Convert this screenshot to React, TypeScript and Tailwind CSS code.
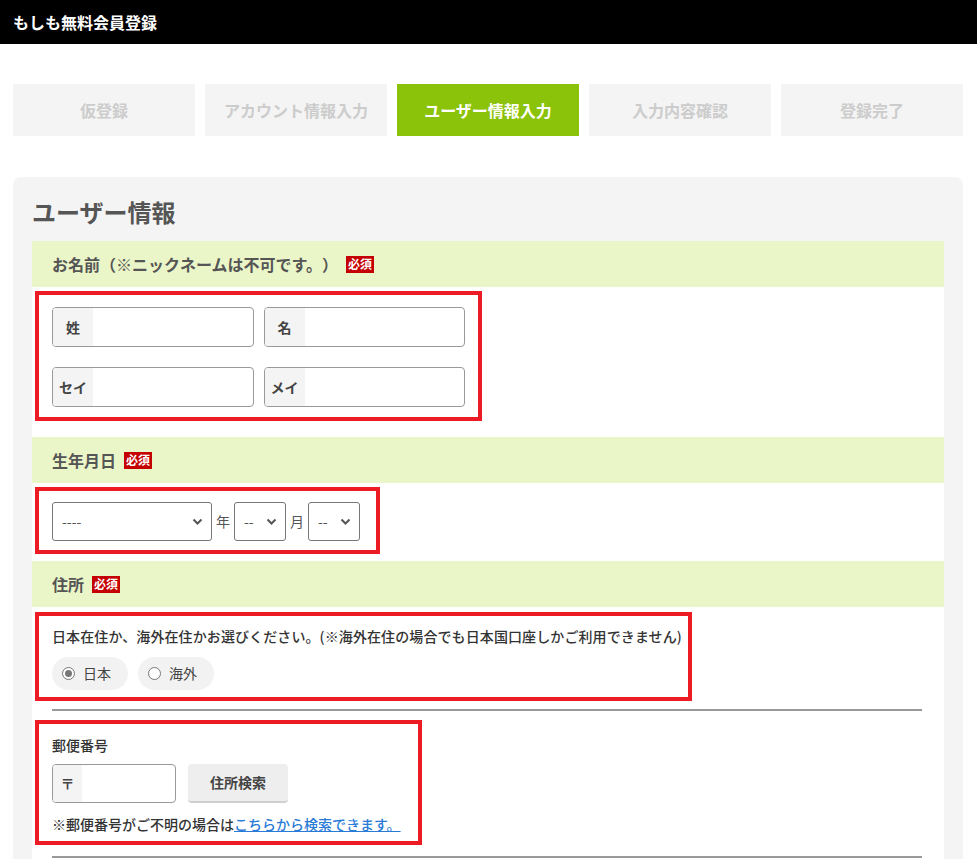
import React, { useState } from 'react';

const FONT = { fontFamily: '"Noto Sans CJK JP", "Noto Sans", sans-serif' };

const STEPS = ['仮登録', 'アカウント情報入力', 'ユーザー情報入力', '入力内容確認', '登録完了'];

const Badge = () => (
  <span className="ml-2 inline-flex h-[17px] items-center bg-[#c40000] px-[2px] text-[12px] font-bold leading-none text-white">
    必須
  </span>
);

const Heading = ({ children }: { children: React.ReactNode }) => (
  <div className="flex h-[46px] items-center bg-[#ebf6c8] px-5 text-[16px] font-bold leading-none text-[#555]">
    {children}
  </div>
);

const PrefixInput = ({ label, className }: { label: string; className: string }) => (
  <div className={`flex h-10 overflow-hidden rounded-[4px] border border-[#999] bg-white ${className}`}>
    <span className="flex w-10 shrink-0 items-center justify-center bg-[#f4f4f4] text-[14px] font-bold text-[#444]">
      {label}
    </span>
    <input className="min-w-0 flex-1 px-2 text-[14px] outline-none" />
  </div>
);

const Select = ({ value, className }: { value: string; className: string }) => (
  <div className={`relative h-[39px] rounded-[3px] border border-[#777] bg-white ${className}`}>
    <span className="absolute left-[9px] top-0 flex h-full items-center text-[14px] text-[#555]">{value}</span>
    <svg className="absolute right-[8px] top-[15px]" width="11" height="8" viewBox="0 0 11 8" fill="none">
      <path d="M1.5 1.5 L5.5 5.5 L9.5 1.5" stroke="#555" strokeWidth="2" />
    </svg>
  </div>
);

export default function App() {
  const [country, setCountry] = useState<'jp' | 'abroad'>('jp');

  return (
    <div className="min-h-[859px] bg-white [text-spacing-trim:space-all]" style={FONT}>
      {/* Header */}
      <div className="flex h-11 items-center bg-black px-[13px] text-[16px] font-bold text-white">
        もしも無料会員登録
      </div>

      {/* Steps */}
      <div className="mx-[13px] mt-10 flex gap-[10px]">
        {STEPS.map((s, i) => (
          <div
            key={s}
            className={`flex h-[52px] w-[182px] items-center justify-center text-[16px] font-bold ${
              i === 2 ? 'bg-[#8bc20a] text-white' : 'bg-[#f4f4f4] text-[#cccccc]'
            }`}
          >
            {s}
          </div>
        ))}
      </div>

      {/* Card */}
      <div className="mx-[13px] mt-[41px] w-[950px] rounded-t-[8px] bg-[#f4f4f4] px-[19px]">
        <h1 className="pb-[11px] pt-[17px] text-[24px] font-bold leading-[36px] text-[#555]">ユーザー情報</h1>

        <div className="bg-white">
          <Heading>
            お名前（※ニックネームは不可です。）<Badge />
          </Heading>
          <div className="px-[3px] pb-4 pt-1">
            <div className="w-[447px] border-4 border-[#ed1c24] px-[13px] pb-[10px] pt-3">
              <div className="flex gap-[10px]">
                <PrefixInput label="姓" className="w-[202px]" />
                <PrefixInput label="名" className="w-[202px]" />
              </div>
              <div className="mt-5 flex gap-[10px]">
                <PrefixInput label="セイ" className="w-[202px]" />
                <PrefixInput label="メイ" className="w-[202px]" />
              </div>
            </div>
          </div>

          <Heading>
            生年月日<Badge />
          </Heading>
          <div className="px-[3px] pb-[7px] pt-1">
            <div className="flex w-[345px] items-center border-4 border-[#ed1c24] px-[13px] pb-[9px] pt-[11px] text-[14px] text-[#555]">
              <Select value="----" className="w-[160px]" />
              <span className="mx-[4px]">年</span>
              <Select value="--" className="w-[52px]" />
              <span className="mx-[4px]">月</span>
              <Select value="--" className="w-[52px]" />
            </div>
          </div>

          <Heading>
            住所<Badge />
          </Heading>
          <div className="px-[3px] pt-[5px]">
            <div className="w-[657px] border-4 border-[#ed1c24] px-[13px] pb-[7px] pt-[10px]">
              <p className="whitespace-nowrap text-[14px] font-medium leading-[20px] tracking-[0.1px] text-[#333]">
                日本在住か、海外在住かお選びください。(※海外在住の場合でも日本国口座しかご利用できません)
              </p>
              <div className="mt-[11px] flex gap-[10px]">
                {[
                  { id: 'jp', label: '日本' },
                  { id: 'abroad', label: '海外' },
                ].map((r) => (
                  <button
                    key={r.id}
                    onClick={() => setCountry(r.id as 'jp' | 'abroad')}
                    className="flex h-[33px] w-[76px] items-center gap-[8px] rounded-full bg-[#f2f2f2] pl-[10px] text-[14px] text-[#444]"
                  >
                    <span className="flex h-[13px] w-[13px] items-center justify-center rounded-full border border-[#777] bg-white">
                      {country === r.id && <span className="h-[7px] w-[7px] rounded-full bg-[#777]" />}
                    </span>
                    {r.label}
                  </button>
                ))}
              </div>
            </div>
          </div>

          <div className="ml-5 mt-[8px] h-[2px] w-[870px] bg-[#999]" />

          <div className="px-[3px] pt-[9px]">
            <div className="w-[387px] border-4 border-[#ed1c24] px-[13px] pb-[7px] pt-[11px]">
              <div className="text-[14px] font-medium leading-[20px] text-[#333]">郵便番号</div>
              <div className="mt-[9px] flex items-center gap-3">
                <PrefixInput label="〒" className="h-[39px] w-[124px] [&>span]:w-[29px]" />
                <button className="h-[39px] w-[100px] rounded-[4px] border-b-2 border-[#cfcfcf] bg-[#eeeeee] text-[14px] font-bold text-[#444]">
                  住所検索
                </button>
              </div>
              <p className="mt-[11px] text-[14px] font-medium leading-[20px] text-[#333]">
                ※郵便番号がご不明の場合は
                <a href="#" className="text-[#2a7bd6] underline">
                  こちらから検索できます。
                </a>
              </p>
            </div>
          </div>

          <div className="ml-5 mt-[11px] h-[2px] w-[870px] bg-[#999]" />
          <div className="h-4" />
        </div>
      </div>
    </div>
  );
}
